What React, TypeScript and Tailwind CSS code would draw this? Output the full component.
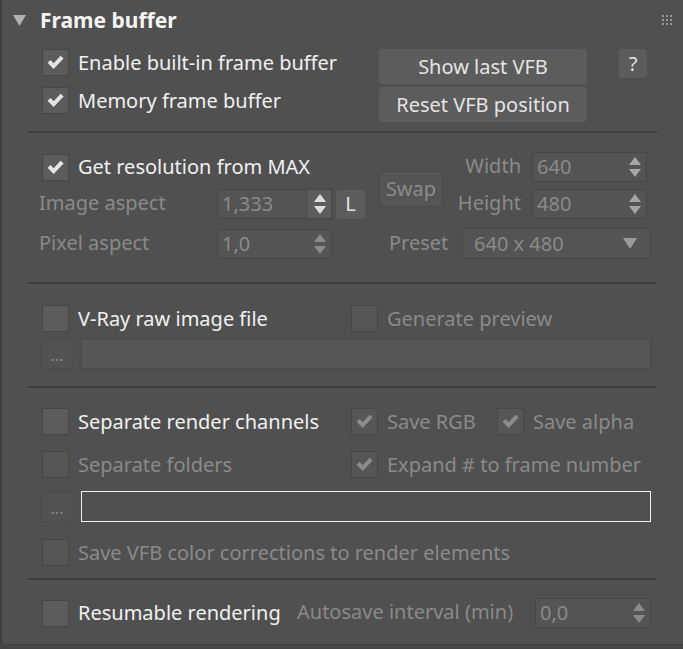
import React from "react";

const FONT = { fontFamily: '"Noto Sans", "Liberation Sans", Arial, sans-serif' };

function Check({ checked, disabled }: { checked?: boolean; disabled?: boolean }) {
  return (
    <div
      className={
        "w-[27px] h-[27px] shrink-0 border border-[#464646] flex items-center justify-center " +
        (disabled ? "bg-[#565656]" : "bg-[#5c5c5c]")
      }
    >
      {checked && (
        <svg width="17" height="15" viewBox="0 0 17 15">
          <path
            d="M0.5 7.8 L3.6 5 L6.6 8.2 L13.6 0.8 L16.6 3.6 L6.6 14 Z"
            fill={disabled ? "#8c8c8c" : "#e4e4e4"}
          />
        </svg>
      )}
    </div>
  );
}

function Arrows({ bright, hover }: { bright?: boolean; hover?: boolean }) {
  const c = hover ? "#e0e0e0" : bright ? "#a6a6a6" : "#8a8a8a";
  return (
    <div
      className={
        "h-full w-[23px] flex flex-col items-center justify-center gap-[4px] " +
        (hover ? "bg-[#5e5e5e]" : "")
      }
    >
      <svg width="12" height="8" viewBox="0 0 12 8">
        <path d="M6 0 L12 8 L0 8 Z" fill={c} />
      </svg>
      <svg width="12" height="8" viewBox="0 0 12 8">
        <path d="M0 0 L12 0 L6 8 Z" fill={c} />
      </svg>
    </div>
  );
}

function SpinInput({
  value,
  w,
  bright,
  hover,
}: {
  value: string;
  w: string;
  bright?: boolean;
  hover?: boolean;
}) {
  return (
    <div
      className={
        w +
        " h-[30px] shrink-0 bg-[#545454] border border-[#474747] flex items-center justify-between"
      }
    >
      <span className="pl-[4px] text-[20px] text-[#8a8a8a] leading-none">{value}</span>
      <Arrows bright={bright} hover={hover} />
    </div>
  );
}

function Label({ children, disabled }: { children: React.ReactNode; disabled?: boolean }) {
  return (
    <span
      className={
        "text-[20px] leading-none whitespace-nowrap " +
        (disabled ? "text-[#8a8a8a]" : "text-[#f0f0f0]")
      }
    >
      {children}
    </span>
  );
}

function CheckRow({
  checked,
  disabled,
  text,
  cdisabled,
}: {
  checked?: boolean;
  disabled?: boolean;
  cdisabled?: boolean;
  text: string;
}) {
  return (
    <div className="flex items-center gap-[9px] h-[27px]">
      <Check checked={checked} disabled={cdisabled ?? disabled} />
      <Label disabled={disabled}>{text}</Label>
    </div>
  );
}

function Sep() {
  return <div className="ml-[25px] w-[630px] h-[2px] bg-[#3e3e3e]" />;
}

function Btn({
  children,
  cls,
  disabled,
}: {
  children: React.ReactNode;
  cls: string;
  disabled?: boolean;
}) {
  return (
    <div
      className={
        cls +
        " shrink-0 rounded-[4px] flex items-center justify-center text-[20px] leading-none " +
        (disabled
          ? "bg-[#555555] border border-[#4a4a4a] text-[#8a8a8a]"
          : "bg-[#5c5c5c] text-[#e4e4e4]")
      }
    >
      {children}
    </div>
  );
}

function DotsBtn() {
  return (
    <div className="w-[34px] h-[30px] shrink-0 rounded-[4px] bg-[#525252] border border-[#4a4a4a] flex items-end justify-center pb-[5px]">
      <span className="text-[16px] leading-none text-[#8a8a8a]">...</span>
    </div>
  );
}

export default function App() {
  return (
    <div className="w-[683px] h-[649px] bg-[#454545] overflow-hidden" style={FONT}>
      <div className="h-[645px] bg-[#505050] border-l-2 border-b border-[#3f3f3f] rounded-bl-[5px] flex flex-col">
        {/* Header */}
        <div className="h-[40px] flex items-center">
          <svg className="ml-[11px]" width="13" height="11" viewBox="0 0 13 11">
            <path d="M0 0 L13 0 L6.5 11 Z" fill="#b0b0b0" />
          </svg>
          <span className="ml-[14px] text-[21px] font-bold text-[#f4f4f4] leading-none">
            Frame buffer
          </span>
          <div className="ml-auto mr-[11px] grid grid-cols-3 gap-[2px]">
            {Array.from({ length: 9 }).map((_, i) => (
              <div key={i} className="w-[2px] h-[2px] bg-[#9a9a9a]" />
            ))}
          </div>
        </div>

        {/* Section 1 */}
        <div className="mt-[9px] flex">
          <div className="ml-[40px] w-[337px] flex flex-col gap-[11px]">
            <CheckRow checked text="Enable built-in frame buffer" />
            <CheckRow checked text="Memory frame buffer" />
          </div>
          <div className="w-[208px] flex flex-col gap-[3px]">
            <Btn cls="w-[208px] h-[35px]">Show last VFB</Btn>
            <Btn cls="w-[208px] h-[35px]">Reset VFB position</Btn>
          </div>
          <Btn cls="ml-[32px] w-[28px] h-[29px]">?</Btn>
        </div>

        <div className="mt-[9px]">
          <Sep />
        </div>

        {/* Section 2 */}
        <div className="mt-[19px] flex">
          <div className="ml-[37px] w-[340px] flex flex-col gap-[7px]">
            <div className="h-[30px] flex items-center pl-[3px]">
              <CheckRow checked text="Get resolution from MAX" />
            </div>
            <div className="h-[30px] flex items-center">
              <div className="w-[178px]">
                <Label disabled>Image aspect</Label>
              </div>
              <SpinInput value="1,333" w="w-[115px]" hover />
              <Btn cls="ml-[4px] w-[29px] h-[29px]">L</Btn>
            </div>
          </div>
          <Btn cls="mt-[19px] w-[64px] h-[36px]" disabled>
            Swap
          </Btn>
          <div className="flex flex-col gap-[7px]">
            <div className="h-[30px] flex items-center">
              <div className="w-[78px] text-right">
                <Label disabled>Width</Label>
              </div>
              <div className="ml-[11px]">
                <SpinInput value="640" w="w-[115px]" bright />
              </div>
            </div>
            <div className="h-[30px] flex items-center">
              <div className="w-[78px] text-right">
                <Label disabled>Height</Label>
              </div>
              <div className="ml-[11px]">
                <SpinInput value="480" w="w-[115px]" bright />
              </div>
            </div>
          </div>
        </div>
        <div className="mt-[9px] flex items-center h-[31px]">
          <div className="ml-[37px] w-[178px]">
            <Label disabled>Pixel aspect</Label>
          </div>
          <SpinInput value="1,0" w="w-[115px]" />
          <div className="ml-[57px] w-[73px]">
            <Label disabled>Preset</Label>
          </div>
          <div className="w-[189px] h-[31px] bg-[#545454] border border-[#474747] flex items-center justify-between">
            <span className="pl-[11px] text-[20px] leading-none text-[#8a8a8a]">640 x 480</span>
            <svg className="mr-[13px]" width="14" height="11" viewBox="0 0 14 11">
              <path d="M0 0 L14 0 L7 11 Z" fill="#9a9a9a" />
            </svg>
          </div>
        </div>

        <div className="mt-[23px]">
          <Sep />
        </div>

        {/* Section 3 */}
        <div className="mt-[21px] flex items-center">
          <div className="ml-[40px] w-[309px]">
            <CheckRow text="V-Ray raw image file" />
          </div>
          <CheckRow text="Generate preview" disabled />
        </div>
        <div className="mt-[7px] ml-[38px] flex gap-[7px]">
          <DotsBtn />
          <div className="w-[570px] h-[30px] bg-[#575757] border border-[#4a4a4a]" />
        </div>

        <div className="mt-[17px]">
          <Sep />
        </div>

        {/* Section 4 */}
        <div className="mt-[20px] flex items-center">
          <div className="ml-[40px] w-[309px]">
            <CheckRow text="Separate render channels" />
          </div>
          <div className="w-[146px]">
            <CheckRow checked disabled text="Save RGB" />
          </div>
          <CheckRow checked disabled text="Save alpha" />
        </div>
        <div className="mt-[16px] flex items-center">
          <div className="ml-[40px] w-[309px]">
            <CheckRow disabled text="Separate folders" />
          </div>
          <CheckRow checked disabled text="Expand # to frame number" />
        </div>
        <div className="mt-[13px] ml-[38px] flex gap-[7px] items-end">
          <DotsBtn />
          <div className="w-[570px] h-[31px] bg-[#505050] border border-[#f2f2f2]" />
        </div>
        <div className="mt-[17px] ml-[40px]">
          <CheckRow disabled text="Save VFB color corrections to render elements" />
        </div>

        <div className="mt-[12px]">
          <Sep />
        </div>

        {/* Section 5 */}
        <div className="mt-[18px] flex items-center h-[30px]">
          <div className="ml-[40px] w-[255px]">
            <CheckRow text="Resumable rendering" />
          </div>
          <div className="w-[238px]">
            <Label disabled>Autosave interval (min)</Label>
          </div>
          <SpinInput value="0,0" w="w-[116px]" />
        </div>
      </div>
    </div>
  );
}
